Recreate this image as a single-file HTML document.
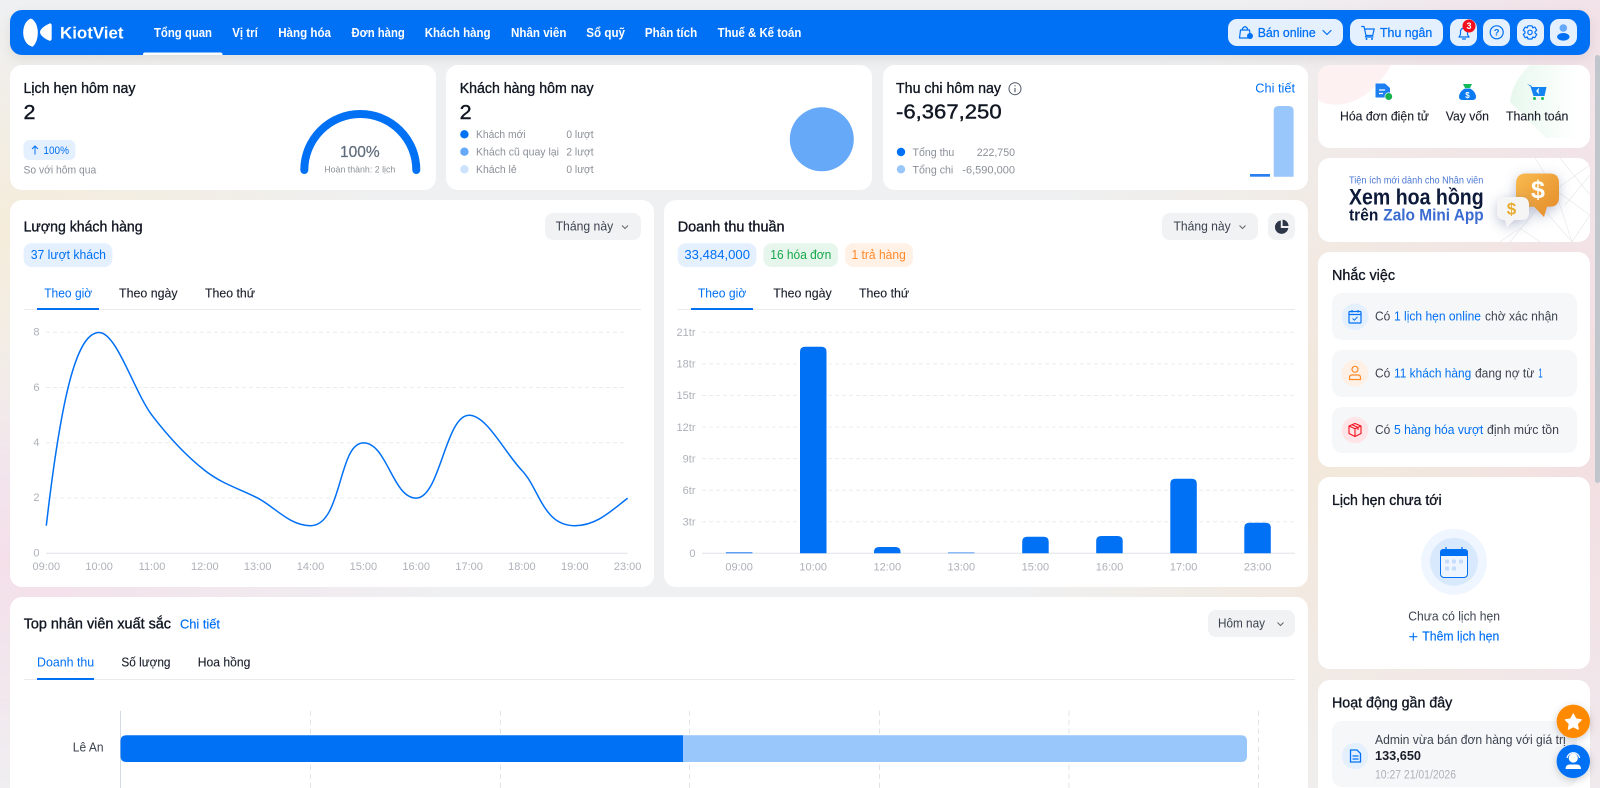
<!DOCTYPE html>
<html lang="vi">
<head>
<meta charset="utf-8">
<title>KiotViet - Tổng quan</title>
<style>
html,body{margin:0;padding:0;width:1600px;height:788px;overflow:hidden}
body{position:relative;font-family:"Liberation Sans",sans-serif;background-color:#eff0f2;
background-image:
radial-gradient(ellipse 400px 230px at 0 230px,#f5ecda 0,rgba(245,236,218,0) 100%),
radial-gradient(ellipse 450px 260px at 0 560px,#f4dfe9 0,rgba(244,223,233,0) 100%),
radial-gradient(ellipse 330px 430px at 1320px 440px,#f3e8da 0,rgba(243,232,218,0) 100%),
radial-gradient(ellipse 420px 520px at 1610px 420px,#f3dbe2 0,rgba(243,219,226,0) 100%),
radial-gradient(ellipse 380px 220px at 1600px 20px,#f1e4ea 0,rgba(241,228,234,0) 100%)}
.b{position:absolute;box-sizing:border-box}
.card{background:#fff;border-radius:12px}
.hd{background:#0070f4;border-radius:12px;box-shadow:0 4px 12px rgba(0,0,0,.08)}
.hb{background:#e5f0ff;border-radius:9px;top:19px;height:27px}
.dd{background:#f1f2f4;border-radius:8px}
.row{background:#f6f7f9;border-radius:10px;left:1332px;width:245px}
svg.o{position:absolute;left:0;top:0}
text{font-family:"Liberation Sans",sans-serif}
.n{font-size:13px;font-weight:700;fill:#fff}
.t{font-size:14.5px;fill:#111722;stroke:#111722;stroke-width:.35}
.k{font-size:20.5px;fill:#111722;stroke:#111722;stroke-width:.4}
.g{font-size:11px;fill:#8b9098}
.a{font-size:11px;fill:#adb1b8}
.s{font-size:12.5px;fill:#3c4350}
.u{font-size:12.5px;fill:#0070f4}
.v{font-size:12.5px;fill:#1a1f2b;stroke:#1a1f2b;stroke-width:.12}
.grid{stroke:#ebecef;stroke-width:1;stroke-dasharray:4 3;fill:none}
.ax{stroke:#e8eaed;stroke-width:1.4}
.ic{fill:none;stroke:#0070f4;stroke-width:1.2;stroke-linecap:round;stroke-linejoin:round}
</style>
</head>
<body>
<div class="b hd" style="left:10px;top:10px;width:1580px;height:45px"></div>
<div class="b hb" style="left:1228px;width:115px"></div>
<div class="b hb" style="left:1350px;width:93px"></div>
<div class="b hb" style="left:1450px;width:27px"></div>
<div class="b hb" style="left:1483px;width:27px"></div>
<div class="b hb" style="left:1517px;width:27px"></div>
<div class="b hb" style="left:1550px;width:27px"></div>

<div class="b card" style="left:10px;top:65px;width:426px;height:125px"></div>
<div class="b card" style="left:446px;top:65px;width:426px;height:125px"></div>
<div class="b card" style="left:883px;top:65px;width:425px;height:125px"></div>
<div class="b card" style="left:10px;top:200px;width:644px;height:387px"></div>
<div class="b card" style="left:664px;top:200px;width:644px;height:387px"></div>
<div class="b card" style="left:10px;top:597px;width:1298px;height:220px"></div>
<div class="b card" style="left:1318px;top:65px;width:272px;height:83px"></div>
<div class="b card" style="left:1318px;top:158px;width:272px;height:84px"></div>
<div class="b card" style="left:1318px;top:252px;width:272px;height:215px"></div>
<div class="b card" style="left:1318px;top:477px;width:272px;height:192px"></div>
<div class="b card" style="left:1318px;top:680px;width:272px;height:140px"></div>
<div class="b row" style="top:293px;height:47px"></div>
<div class="b row" style="top:350px;height:47px"></div>
<div class="b row" style="top:407px;height:46px"></div>
<div class="b row" style="top:721px;height:66px"></div>

<div class="b dd" style="left:545px;top:213px;width:96px;height:27px"></div>
<div class="b dd" style="left:1162px;top:213px;width:96px;height:27px"></div>
<div class="b dd" style="left:1268px;top:213px;width:27px;height:27px"></div>
<div class="b dd" style="left:1208px;top:610px;width:87px;height:27px"></div>
<div class="b" style="left:1595px;top:55px;width:5px;height:428px;background:#c1c6cd;border-radius:3px"></div>

<svg class="o" width="1600" height="788" viewBox="0 0 1600 788" xmlns="http://www.w3.org/2000/svg">
<defs>
<clipPath id="c1"><rect x="1318" y="65" width="272" height="83" rx="12"/></clipPath>
<clipPath id="c2"><rect x="1318" y="158" width="272" height="84" rx="12"/></clipPath>
<linearGradient id="gb" x1="0" x2="1"><stop offset="0" stop-color="#e8f8ee"/><stop offset=".85" stop-color="#fff"/></linearGradient>
<linearGradient id="go" x1="0" y1="0" x2="1" y2="1"><stop offset="0" stop-color="#f9bb4f"/><stop offset="1" stop-color="#e38a28"/></linearGradient>
<filter id="sh" x="-50%" y="-50%" width="200%" height="200%"><feDropShadow dx="0" dy="3" stdDeviation="6" flood-color="#5b6b9a" flood-opacity=".4"/></filter>
<filter id="fs" x="-40%" y="-40%" width="180%" height="180%"><feDropShadow dx="0" dy="2" stdDeviation="4" flood-color="#000" flood-opacity=".2"/></filter>
</defs>

<!-- logo -->
<path d="M31 18.5C25.5 20.5 23.2 26.5 23.2 32.5C23.2 39 26 45 32.5 46.8C36 44 37.8 38.5 37.8 32.5C37.8 26.5 35.5 20.5 31 18.5Z" fill="#fff"/>
<path d="M49.5 23.5C45 25.5 40 29 40 32C40 35.5 45 39 49.5 40.8C51 41 51.7 40 51.7 38V26C51.7 24 51 23 49.5 23.5Z" fill="#fff"/>
<text x="60" y="38.3" class="n" style="font-size:17px" textLength="63.5" lengthAdjust="spacingAndGlyphs">KiotViet</text>

<!-- nav -->
<text x="154" y="37" class="n" textLength="58" lengthAdjust="spacingAndGlyphs">Tổng quan</text>
<text x="232.2" y="37" class="n" textLength="25.6" lengthAdjust="spacingAndGlyphs">Vị trí</text>
<text x="278.2" y="37" class="n" textLength="52.8" lengthAdjust="spacingAndGlyphs">Hàng hóa</text>
<text x="351.5" y="37" class="n" textLength="53.3" lengthAdjust="spacingAndGlyphs">Đơn hàng</text>
<text x="424.7" y="37" class="n" textLength="65.9" lengthAdjust="spacingAndGlyphs">Khách hàng</text>
<text x="511" y="37" class="n" textLength="55.4" lengthAdjust="spacingAndGlyphs">Nhân viên</text>
<text x="586.3" y="37" class="n" textLength="38.7" lengthAdjust="spacingAndGlyphs">Sổ quỹ</text>
<text x="644.9" y="37" class="n" textLength="52.3" lengthAdjust="spacingAndGlyphs">Phân tích</text>
<text x="717.6" y="37" class="n" textLength="83.7" lengthAdjust="spacingAndGlyphs">Thuế &amp; Kế toán</text>
<path d="M143 55V54.5Q143 52.5 145 52.5H220.5Q222.5 52.5 222.5 54.5V55Z" fill="#fff"/>

<!-- header buttons -->
<path class="ic" d="M1240.5 30H1249.5L1250.5 38H1239.5ZM1242.5 30V28.5Q1245 25 1247.5 28.5V30"/>
<circle cx="1250" cy="36" r="3" fill="#0070f4"/>
<text x="1257.7" y="36.8" class="u" style="stroke:#0070f4;stroke-width:.25" textLength="58" lengthAdjust="spacingAndGlyphs">Bán online</text>
<path class="ic" d="M1323 30.5L1327 34.5L1331 30.5" stroke-width="1.4"/>
<path class="ic" d="M1361.7 26.5H1364L1366 35.5H1372.7L1374.2 29H1364.8M1366 35.5L1365.5 37H1373"/>
<circle cx="1366.5" cy="39" r="1" fill="#0070f4"/><circle cx="1372" cy="39" r="1" fill="#0070f4"/>
<text x="1380" y="36.8" class="u" style="stroke:#0070f4;stroke-width:.25" textLength="52.3" lengthAdjust="spacingAndGlyphs">Thu ngân</text>
<path class="ic" d="M1459 37H1469L1467.5 34.5V31.5A3.5 3.5 0 0 0 1460.5 31.5V34.5ZM1462.5 39H1465.5"/>
<circle cx="1469" cy="26" r="6.5" fill="#f2101e"/>
<text x="1469" y="29" font-size="9" font-weight="700" fill="#fff" text-anchor="middle">3</text>
<circle class="ic" cx="1496.7" cy="32.3" r="6.5"/>
<text x="1496.7" y="35.6" font-size="9.5" font-weight="700" fill="#0070f4" text-anchor="middle">?</text>
<path class="ic" d="M1528 25.8H1532L1532.7 27.8L1534.8 27L1536.7 30.2L1535 31.8V33L1536.7 34.5L1534.8 37.7L1532.7 37L1532 39H1528L1527.3 37L1525.2 37.7L1523.3 34.5L1525 33V31.8L1523.3 30.2L1525.2 27L1527.3 27.8Z"/>
<circle class="ic" cx="1530" cy="32.4" r="2.2"/>
<circle cx="1563.3" cy="28" r="3.8" fill="#66a9f8"/>
<ellipse cx="1563.3" cy="36.8" rx="6.2" ry="3.8" fill="#0070f4"/>

<!-- card 1 -->
<text x="23.5" y="93" class="t" textLength="112" lengthAdjust="spacingAndGlyphs">Lịch hẹn hôm nay</text>
<text x="23.5" y="119" class="k" textLength="12" lengthAdjust="spacingAndGlyphs">2</text>
<rect x="23.5" y="140" width="52" height="20" rx="6" fill="#e5f0ff"/>
<path d="M35 154.5V146M32 149L35 146L38 149" fill="none" stroke="#0070f4" stroke-width="1"/>
<text x="43.4" y="154" class="u" style="font-size:11px" textLength="25.6" lengthAdjust="spacingAndGlyphs">100%</text>
<text x="23.5" y="173.3" class="g" textLength="72.7" lengthAdjust="spacingAndGlyphs">So với hôm qua</text>
<path d="M304.3 170A56 56 0 0 1 416.3 170" fill="none" stroke="#0070f4" stroke-width="8" stroke-linecap="round"/>
<text x="340" y="157" font-size="15.5" fill="#5f6b7a" stroke="#5f6b7a" stroke-width=".2" textLength="39.7" lengthAdjust="spacingAndGlyphs">100%</text>
<text x="324.3" y="172.7" class="g" style="font-size:9.5px" textLength="71" lengthAdjust="spacingAndGlyphs">Hoàn thành: 2 lịch</text>

<!-- card 2 -->
<text x="459.7" y="93" class="t" textLength="133.9" lengthAdjust="spacingAndGlyphs">Khách hàng hôm nay</text>
<text x="459.7" y="119" class="k" textLength="12" lengthAdjust="spacingAndGlyphs">2</text>
<circle cx="464.4" cy="134.3" r="4.2" fill="#0070f4"/>
<circle cx="464.4" cy="151.7" r="4.2" fill="#66a9f8"/>
<circle cx="464.4" cy="169.3" r="4.2" fill="#cce2fd"/>
<text x="476" y="138" class="g" textLength="49.6" lengthAdjust="spacingAndGlyphs">Khách mới</text>
<text x="476" y="155.5" class="g" textLength="83" lengthAdjust="spacingAndGlyphs">Khách cũ quay lại</text>
<text x="476" y="173" class="g" textLength="40.7" lengthAdjust="spacingAndGlyphs">Khách lẻ</text>
<text x="566.4" y="138" class="g" textLength="27.2" lengthAdjust="spacingAndGlyphs">0 lượt</text>
<text x="566.4" y="155.5" class="g" textLength="27.2" lengthAdjust="spacingAndGlyphs">2 lượt</text>
<text x="566.4" y="173" class="g" textLength="27.2" lengthAdjust="spacingAndGlyphs">0 lượt</text>
<circle cx="821.8" cy="139.3" r="32" fill="#66a9f8"/>

<!-- card 3 -->
<text x="896" y="93" class="t" textLength="105" lengthAdjust="spacingAndGlyphs">Thu chi hôm nay</text>
<circle cx="1015" cy="88.7" r="6" fill="none" stroke="#4b5563" stroke-width="1"/>
<path d="M1015 88V92.3M1015 85.3V86.4" stroke="#4b5563" stroke-width="1.1"/>
<text x="1255.3" y="92.5" class="u" textLength="39.7" lengthAdjust="spacingAndGlyphs">Chi tiết</text>
<text x="896" y="118.3" class="k" textLength="105.6" lengthAdjust="spacingAndGlyphs">-6,367,250</text>
<circle cx="901" cy="152" r="4.2" fill="#0070f4"/>
<circle cx="901" cy="169.3" r="4.2" fill="#99c6fb"/>
<text x="912.5" y="156" class="g" textLength="41.8" lengthAdjust="spacingAndGlyphs">Tổng thu</text>
<text x="976.7" y="156" class="g" textLength="38.3" lengthAdjust="spacingAndGlyphs">222,750</text>
<text x="912.5" y="173.5" class="g" textLength="40.8" lengthAdjust="spacingAndGlyphs">Tổng chi</text>
<text x="962.3" y="173.5" class="g" textLength="52.7" lengthAdjust="spacingAndGlyphs">-6,590,000</text>
<rect x="1250" y="174" width="20" height="2.7" fill="#2b7ef0"/>
<path d="M1273.7 176.7V111Q1273.7 106 1278.7 106H1288.6Q1293.6 106 1293.6 111V176.7Z" fill="#99c6fb"/>

<!-- left chart card -->
<text x="23.6" y="231.3" class="t" textLength="119" lengthAdjust="spacingAndGlyphs">Lượng khách hàng</text>
<text x="555.6" y="230.7" class="s" textLength="57.6" lengthAdjust="spacingAndGlyphs">Tháng này</text>
<path d="M622 225.5L625 228.5L628 225.5" fill="none" stroke="#666" stroke-width="1"/>
<rect x="23.6" y="243.3" width="88.8" height="23.7" rx="8" fill="#e5f0ff"/>
<text x="30.7" y="259" class="u" textLength="75.3" lengthAdjust="spacingAndGlyphs">37 lượt khách</text>
<text x="44.2" y="297.7" class="u" textLength="48" lengthAdjust="spacingAndGlyphs">Theo giờ</text>
<text x="119" y="297.7" class="v" textLength="58.6" lengthAdjust="spacingAndGlyphs">Theo ngày</text>
<text x="205" y="297.7" class="v" textLength="50" lengthAdjust="spacingAndGlyphs">Theo thứ</text>
<line x1="23.6" y1="309.5" x2="641" y2="309.5" stroke="#e8eaed" stroke-width="1"/>
<rect x="37" y="308" width="62" height="2" fill="#0070f4"/>

<path class="grid" d="M46 332.3H627.5M46 387.5H627.5M46 442.7H627.5M46 498H627.5"/>
<line class="ax" x1="46" y1="553.3" x2="627.5" y2="553.3"/>
<text x="39.5" y="335.7" class="a" text-anchor="end">8</text>
<text x="39.5" y="391" class="a" text-anchor="end">6</text>
<text x="39.5" y="446" class="a" text-anchor="end">4</text>
<text x="39.5" y="501" class="a" text-anchor="end">2</text>
<text x="39.5" y="556.5" class="a" text-anchor="end">0</text>
<g class="a" text-anchor="middle">
<text x="46.3" y="570">09:00</text><text x="99.1" y="570">10:00</text><text x="152" y="570">11:00</text><text x="204.8" y="570">12:00</text><text x="257.7" y="570">13:00</text><text x="310.5" y="570">14:00</text><text x="363.4" y="570">15:00</text><text x="416.2" y="570">16:00</text><text x="469.1" y="570">17:00</text><text x="521.9" y="570">18:00</text><text x="574.8" y="570">19:00</text><text x="627.6" y="570">23:00</text>
</g>
<path transform="translate(46.3,553.3) scale(52.85,-27.6)" vector-effect="non-scaling-stroke" fill="none" stroke="#0070f4" stroke-width="1.5" d="M0 1C.3 6 .6 8 1 8C1.333 8 1.667 5.833 2 5C2.333 4.167 2.667 3.5 3 3C3.333 2.5 3.667 2.333 4 2C4.333 1.667 4.6 1 5 1C5.6 1 5.52 4 6 4C6.45 4 6.55 2 7 2C7.45 2 7.55 5 8 5C8.333 5 8.667 3.667 9 3C9.333 2.333 9.4 1 10 1C10.4 1 10.667 1.5 11 2"/>

<!-- right chart card -->
<text x="677.7" y="231.3" class="t" textLength="106.9" lengthAdjust="spacingAndGlyphs">Doanh thu thuần</text>
<text x="1173.5" y="230.7" class="s" textLength="57.2" lengthAdjust="spacingAndGlyphs">Tháng này</text>
<path d="M1239.5 225.5L1242.5 228.5L1245.5 225.5" fill="none" stroke="#666" stroke-width="1"/>
<path d="M1280.8 220.5A6.7 6.7 0 1 0 1288.3 228H1280.8Z" fill="#2d3748"/>
<path d="M1282.6 219.6A6.5 6.5 0 0 1 1288.5 226H1282.6Z" fill="#2d3748"/>
<rect x="677.7" y="243.3" width="78.7" height="23.7" rx="8" fill="#e5f0ff"/>
<text x="684.4" y="259" class="u" textLength="65.6" lengthAdjust="spacingAndGlyphs">33,484,000</text>
<rect x="763.5" y="243.3" width="74.5" height="23.7" rx="8" fill="#e6f6ec"/>
<text x="770.3" y="259" class="u" style="fill:#17a84a" textLength="61" lengthAdjust="spacingAndGlyphs">16 hóa đơn</text>
<rect x="845.2" y="243.3" width="67.8" height="23.7" rx="8" fill="#fff1e6"/>
<text x="851.5" y="259" class="u" style="fill:#ff8a2a" textLength="54.3" lengthAdjust="spacingAndGlyphs">1 trả hàng</text>
<text x="697.9" y="297.7" class="u" textLength="48.4" lengthAdjust="spacingAndGlyphs">Theo giờ</text>
<text x="773.2" y="297.7" class="v" textLength="58.5" lengthAdjust="spacingAndGlyphs">Theo ngày</text>
<text x="859" y="297.7" class="v" textLength="50.2" lengthAdjust="spacingAndGlyphs">Theo thứ</text>
<line x1="677.7" y1="309.5" x2="1295" y2="309.5" stroke="#e8eaed" stroke-width="1"/>
<rect x="691" y="308" width="62" height="2" fill="#0070f4"/>
<path class="grid" d="M702 332.3H1295M702 363.9H1295M702 395.5H1295M702 427H1295M702 458.6H1295M702 490.2H1295M702 521.8H1295"/>
<line class="ax" x1="702" y1="553.3" x2="1295" y2="553.3"/>
<g class="a" text-anchor="end">
<text x="695.5" y="336">21tr</text><text x="695.5" y="367.5">18tr</text><text x="695.5" y="399">15tr</text><text x="695.5" y="431">12tr</text><text x="695.5" y="462.5">9tr</text><text x="695.5" y="494">6tr</text><text x="695.5" y="525.5">3tr</text><text x="695.5" y="557">0</text>
</g>
<g class="a" text-anchor="middle">
<text x="739.1" y="570.5">09:00</text><text x="813.2" y="570.5">10:00</text><text x="887.3" y="570.5">12:00</text><text x="961.3" y="570.5">13:00</text><text x="1035.4" y="570.5">15:00</text><text x="1109.5" y="570.5">16:00</text><text x="1183.6" y="570.5">17:00</text><text x="1257.6" y="570.5">23:00</text>
</g>
<g fill="#0070f4">
<rect x="725.9" y="552" width="26.5" height="1.4" fill="#5a9ef5"/>
<path d="M800 553.3V351.7Q800 346.7 805 346.7H821.5Q826.5 346.7 826.5 351.7V553.3Z"/>
<path d="M874 553.3V552Q874 547 879 547H895.5Q900.5 547 900.5 552V553.3Z"/>
<rect x="948" y="552.3" width="26.5" height="1" fill="#5a9ef5"/>
<path d="M1022.2 553.3V541.7Q1022.2 536.7 1027.2 536.7H1043.7Q1048.7 536.7 1048.7 541.7V553.3Z"/>
<path d="M1096.2 553.3V541Q1096.2 536 1101.2 536H1117.7Q1122.7 536 1122.7 541V553.3Z"/>
<path d="M1170.3 553.3V483.7Q1170.3 478.7 1175.3 478.7H1191.8Q1196.8 478.7 1196.8 483.7V553.3Z"/>
<path d="M1244.3 553.3V527.7Q1244.3 522.7 1249.3 522.7H1265.8Q1270.8 522.7 1270.8 527.7V553.3Z"/>
</g>

<!-- top staff card -->
<text x="23.7" y="628.3" class="t" textLength="147.3" lengthAdjust="spacingAndGlyphs">Top nhân viên xuất sắc</text>
<text x="180" y="628.3" class="u" style="stroke:#0070f4;stroke-width:.15" textLength="40" lengthAdjust="spacingAndGlyphs">Chi tiết</text>
<text x="1218" y="627.7" class="s" textLength="47" lengthAdjust="spacingAndGlyphs">Hôm nay</text>
<path d="M1277.5 622.5L1280.5 625.5L1283.5 622.5" fill="none" stroke="#666" stroke-width="1"/>
<text x="37" y="666.7" class="u" textLength="57.2" lengthAdjust="spacingAndGlyphs">Doanh thu</text>
<text x="121.4" y="666.7" class="v" textLength="49.1" lengthAdjust="spacingAndGlyphs">Số lượng</text>
<text x="197.8" y="666.7" class="v" textLength="52.6" lengthAdjust="spacingAndGlyphs">Hoa hồng</text>
<line x1="23.7" y1="679.5" x2="1295" y2="679.5" stroke="#e8eaed" stroke-width="1"/>
<rect x="37" y="678" width="57" height="2" fill="#0070f4"/>
<line x1="120.5" y1="710.7" x2="120.5" y2="788" stroke="#d6dbe2" stroke-width="1"/>
<path d="M310.5 710.7V788M500.5 710.7V788M689.5 710.7V788M879.5 710.7V788M1069 710.7V788M1258.5 710.7V788" stroke="#e0e3e7" stroke-width="1" stroke-dasharray="5 4" fill="none"/>
<path d="M683 735.3H1241Q1247 735.3 1247 741.3V756Q1247 762 1241 762H683Z" fill="#99c6fb"/>
<path d="M126.5 735.3H683V762H126.5Q120.5 762 120.5 756V741.3Q120.5 735.3 126.5 735.3Z" fill="#0070f4"/>
<text x="72.8" y="751.7" class="s" textLength="30.8" lengthAdjust="spacingAndGlyphs">Lê An</text>

<!-- right: shortcuts -->
<g clip-path="url(#c1)">
<path d="M1318 65H1391Q1380 85 1362 97Q1345 107 1328 104Q1320 102 1318 100Z" fill="#fdf2f1"/>
<path d="M1530 65H1590V138H1546Q1520 112 1510 102Q1512 82 1530 65Z" fill="url(#gb)"/>
</g>
<path d="M1376 83.5H1385L1390 88V97.5H1376Q1375.5 97.5 1375.5 97V84Q1375.5 83.5 1376 83.5Z" fill="#1e7ff2"/>
<path d="M1379 90H1385M1379 93.5H1383" stroke="#fff" stroke-width="1.2"/>
<circle cx="1388.7" cy="96.5" r="3.8" fill="#18b14f" stroke="#fff" stroke-width=".6"/>
<path d="M1463 84H1472L1470 88H1465Z" fill="#16b95a"/>
<path d="M1465 88.5H1470C1475 91 1476 95 1476 97Q1476 100 1472 100H1463Q1459 100 1459 97C1459 95 1460 91 1465 88.5Z" fill="#0b7bf2"/>
<text x="1467.5" y="98" font-size="8" font-weight="700" fill="#fff" text-anchor="middle">$</text>
<path d="M1527 84L1531 85.5L1532 87H1546.5L1544.5 96H1533.5L1530.5 86.5Z" fill="#1283f0"/>
<circle cx="1534.5" cy="98.5" r="1.5" fill="#16b95a"/><circle cx="1542.5" cy="98.5" r="1.5" fill="#16b95a"/>
<path d="M1539 88.5L1536.8 91L1539 93.5M1537 91H1539" stroke="#fff" fill="none" stroke-width="1"/>
<text x="1340" y="120.7" class="v" textLength="89" lengthAdjust="spacingAndGlyphs">Hóa đơn điện tử</text>
<text x="1445.7" y="120.7" class="v" textLength="43.3" lengthAdjust="spacingAndGlyphs">Vay vốn</text>
<text x="1506" y="120.7" class="v" textLength="62.3" lengthAdjust="spacingAndGlyphs">Thanh toán</text>

<!-- banner -->
<g clip-path="url(#c2)">
<path d="M1535 158L1555 190L1590 165M1555 190L1590 215M1555 190L1572 242M1540 205L1572 242M1540 205L1510 242M1572 242L1590 215M1560 158L1590 195M1500 242L1520 228L1540 242M1590 175L1565 205" stroke="#e8e9ec" stroke-width=".7" fill="none"/>
<path d="M1516 184Q1516 173.5 1526 173.5H1550Q1559 173.5 1559 183V197Q1559 206.7 1550 206.7H1547L1544 217L1534 206.7H1526Q1516 206.7 1516 197Z" fill="url(#go)" filter="url(#sh)"/>
<path d="M1497 205Q1497 197 1505 197H1521Q1529 197 1529 205V212Q1529 220 1521 220H1514L1507 227L1505 220Q1497 220 1497 212Z" fill="#f5f5f6" filter="url(#sh)"/>
</g>
<text x="1538" y="198" font-size="25" font-weight="700" fill="#fff" text-anchor="middle">$</text>
<text x="1511.5" y="214.5" font-size="17" font-weight="700" fill="#e9ab2f" text-anchor="middle">$</text>
<text x="1349" y="183.3" font-size="10" fill="#4a78d4" textLength="134.3" lengthAdjust="spacingAndGlyphs">Tiện ích mới dành cho Nhân viên</text>
<text x="1349" y="204.3" font-size="22" font-weight="700" fill="#0d1a3a" textLength="134.7" lengthAdjust="spacingAndGlyphs">Xem hoa hồng</text>
<text x="1349" y="220.7" font-size="16.5" font-weight="700" fill="#0d1a3a" textLength="29.3" lengthAdjust="spacingAndGlyphs">trên</text>
<text x="1383.3" y="220.7" font-size="16.5" font-weight="700" fill="#3a6bd1" textLength="100.4" lengthAdjust="spacingAndGlyphs">Zalo Mini App</text>

<!-- reminders -->
<text x="1332" y="280" class="t" textLength="63" lengthAdjust="spacingAndGlyphs">Nhắc việc</text>
<circle cx="1355" cy="316.7" r="13.3" fill="#e5f0ff"/>
<path d="M1350 311.5H1360Q1361 311.5 1361 312.5V322Q1361 323 1360 323H1350Q1349 323 1349 322V312.5Q1349 311.5 1350 311.5ZM1349 314.5H1361M1352 310V312.5M1358 310V312.5" fill="none" stroke="#0070f4" stroke-width="1.2"/>
<path d="M1352.6 318.5L1354.4 320.2L1357.5 316.8" fill="none" stroke="#0070f4" stroke-width="1"/>
<text x="1375" y="320.7" class="s" textLength="15.3" lengthAdjust="spacingAndGlyphs">Có</text>
<text x="1394" y="320.7" class="u" textLength="87" lengthAdjust="spacingAndGlyphs">1 lịch hẹn online</text>
<text x="1485" y="320.7" class="s" textLength="73" lengthAdjust="spacingAndGlyphs">chờ xác nhận</text>

<circle cx="1355" cy="373.3" r="13.3" fill="#fff0e5"/>
<circle cx="1355" cy="369.3" r="3" fill="none" stroke="#ff8a2a" stroke-width="1.2"/>
<path d="M1349.5 379.5V377.5Q1349.5 375 1352 375H1358Q1360.5 375 1360.5 377.5V379.5Z" fill="none" stroke="#ff8a2a" stroke-width="1.2"/>
<text x="1375" y="377.3" class="s" textLength="15.3" lengthAdjust="spacingAndGlyphs">Có</text>
<text x="1394" y="377.3" class="u" textLength="77.3" lengthAdjust="spacingAndGlyphs">11 khách hàng</text>
<text x="1475" y="377.3" class="s" textLength="59.3" lengthAdjust="spacingAndGlyphs">đang nợ từ</text>
<text x="1538.3" y="377.3" class="u" textLength="4.4" lengthAdjust="spacingAndGlyphs">1</text>

<circle cx="1355" cy="430" r="13.3" fill="#ffe5e7"/>
<path d="M1355 423.5L1361 426V433.5L1355 436.5L1349 433.5V426ZM1349 426L1355 428.7L1361 426M1355 428.7V436.5M1352 424.8L1358 427.5V430" fill="none" stroke="#f2101e" stroke-width="1.1" stroke-linejoin="round"/>
<text x="1375" y="434" class="s" textLength="15.3" lengthAdjust="spacingAndGlyphs">Có</text>
<text x="1394" y="434" class="u" textLength="89.3" lengthAdjust="spacingAndGlyphs">5 hàng hóa vượt</text>
<text x="1487" y="434" class="s" textLength="72" lengthAdjust="spacingAndGlyphs">định mức tồn</text>

<!-- upcoming -->
<text x="1332" y="505" class="t" textLength="109.7" lengthAdjust="spacingAndGlyphs">Lịch hẹn chưa tới</text>
<circle cx="1454" cy="561.7" r="33" fill="#f0f6ff"/>
<circle cx="1454" cy="561.7" r="24" fill="#d9e9fd"/>
<rect x="1440.5" y="549.5" width="27" height="28" rx="3.5" fill="#eef5ff" stroke="#0070f4" stroke-width="1"/>
<path d="M1440 556V552.5Q1440 549 1443.5 549H1464.5Q1468 549 1468 552.5V556Z" fill="#0070f4"/>
<path d="M1446 547V551M1462 547V551" stroke="#0070f4" stroke-width="1.3"/>
<g fill="#c5ddfb">
<rect x="1445" y="559.5" width="4" height="4" rx="1"/><rect x="1452" y="559.5" width="4" height="4" rx="1"/><rect x="1459" y="559.5" width="4" height="4" rx="1"/><rect x="1445" y="566.5" width="4" height="4" rx="1"/><rect x="1452" y="566.5" width="4" height="4" rx="1"/>
</g>
<text x="1408.3" y="620.7" class="s" textLength="91.7" lengthAdjust="spacingAndGlyphs">Chưa có lịch hẹn</text>
<path d="M1409.3 636.7H1417.3M1413.3 632.7V640.7" stroke="#0070f4" stroke-width="1.1"/>
<text x="1422.3" y="640.7" class="u" style="stroke:#0070f4;stroke-width:.15" textLength="77" lengthAdjust="spacingAndGlyphs">Thêm lịch hẹn</text>

<!-- activity -->
<text x="1332" y="707.7" class="t" textLength="120.3" lengthAdjust="spacingAndGlyphs">Hoạt động gần đây</text>
<circle cx="1355" cy="756" r="13.3" fill="#e5f0ff"/>
<path d="M1350.5 750H1357L1360.5 753.5V762H1350.5ZM1352.5 756H1358.5M1352.5 759H1358.5" fill="none" stroke="#0070f4" stroke-width="1.3"/>
<text x="1375" y="744" class="s" textLength="190.7" lengthAdjust="spacingAndGlyphs">Admin vừa bán đơn hàng với giá trị</text>
<text x="1375" y="760" font-size="13" font-weight="700" fill="#1a1f2b" textLength="46" lengthAdjust="spacingAndGlyphs">133,650</text>
<text x="1375" y="778.3" class="a" style="font-size:11.5px" textLength="81" lengthAdjust="spacingAndGlyphs">10:27 21/01/2026</text>

<!-- floating -->
<circle cx="1573.3" cy="721.3" r="16.7" fill="#ff8a00" filter="url(#fs)"/>
<path d="M1573.3 714L1575.9 719L1581.2 719.8L1577.3 723.7L1578.2 729.2L1573.3 726.6L1568.4 729.2L1569.3 723.7L1565.4 719.8L1570.7 719Z" fill="#fff" stroke="#fff" stroke-linejoin="round" stroke-width="1.2"/>
<circle cx="1573.3" cy="761.3" r="16.7" fill="#0070f4" filter="url(#fs)"/>
<circle cx="1573.3" cy="758" r="4.6" fill="#fff"/>
<path d="M1567 758A6.4 6.4 0 0 1 1579.6 758" fill="none" stroke="#fff" stroke-width="1.2"/>
<path d="M1565.5 769Q1565.5 764.5 1570 764.5H1576.6Q1581 764.5 1581 769Z" fill="#fff"/>
</svg>
</body>
</html>
